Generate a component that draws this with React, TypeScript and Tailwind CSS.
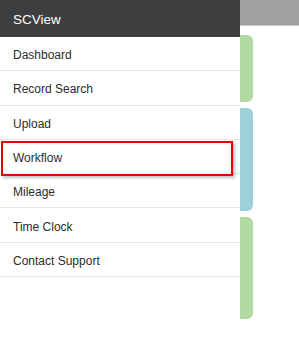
import React from "react";

const items = ["Dashboard", "Record Search", "Upload", "Workflow", "Mileage", "Time Clock", "Contact Support"];

export default function App() {
  return (
    <div className="relative flex w-[299px] h-[343px] bg-white overflow-hidden" style={{ fontFamily: '"Liberation Sans", Arial, sans-serif' }}>
      <div className="w-[240px] shrink-0 flex flex-col bg-white">
        <div className="h-[37px] bg-[#3d3e40] flex items-center pl-[13px] pt-[4px] text-white text-[13.5px]">SCView</div>
        {items.map((it) => (
          <div key={it} className="relative h-[34.3px] box-border border-b-[1.5px] border-[#e6e6e6] flex items-center pl-[13px] pt-[3px] text-[12px] text-[#2b2b2b]">
            {it}
            {it === "Workflow" && (
              <div className="absolute left-[1px] top-[1px] w-[232px] h-[35px] border-2 border-[#e8000b] shadow-[2px_2px_3px_rgba(0,0,0,0.25)]" />
            )}
          </div>
        ))}
      </div>
      <div className="flex-1 flex flex-col">
        <div className="h-[26px] bg-[#a0a0a0] border-b border-[#c8c8c8]" />
        <div className="mt-[9px] w-[13px] h-[67px] bg-[#b1d9a0] rounded-r-[6px]" />
        <div className="mt-[6px] w-[13px] h-[103px] bg-[#9fcfd7] rounded-r-[6px]" />
        <div className="mt-[6px] w-[13px] h-[102px] bg-[#b1d9a0] rounded-r-[6px]" />
      </div>
    </div>
  );
}
